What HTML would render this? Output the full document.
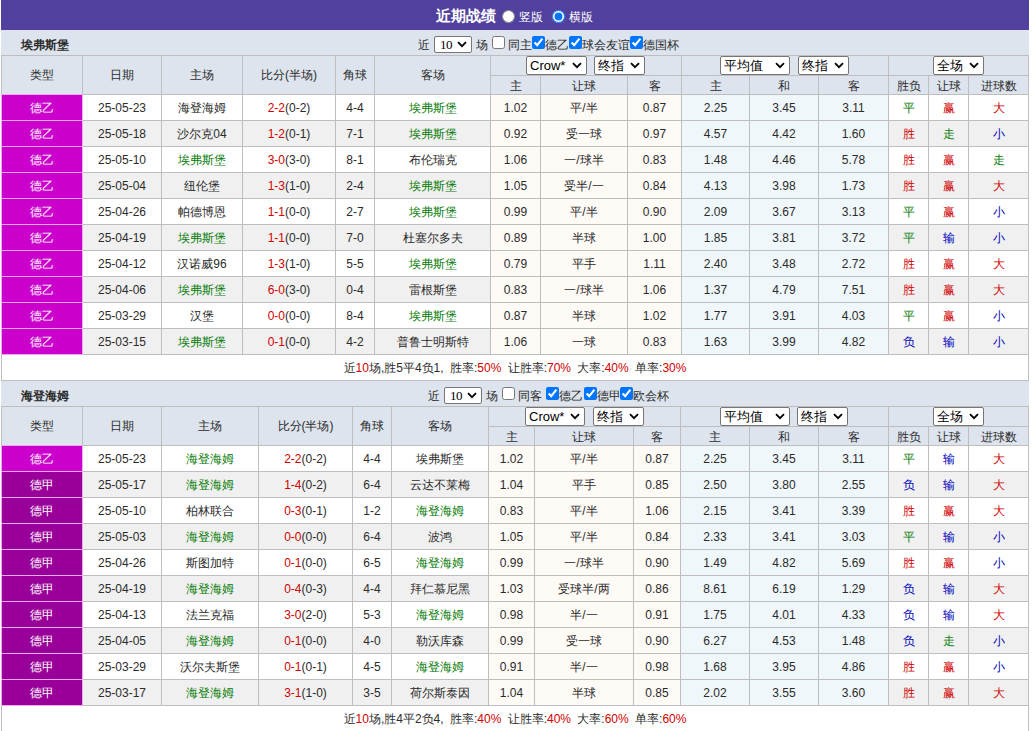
<!DOCTYPE html>
<html><head><meta charset="utf-8"><style>
html,body{margin:0;padding:0;background:#fff;width:1033px;height:731px;overflow:hidden;position:relative}
body{font-family:"Liberation Sans",sans-serif;font-size:12px;color:#2b2b2b}
div,input{position:absolute;box-sizing:border-box;white-space:nowrap}
input{margin:0;width:13px;height:13px}
.sel{height:19px;background:#fff;border:1px solid #767676;border-radius:2px;font-size:13px;color:#000;line-height:17px;padding-left:3px}
.sel svg{position:absolute}
i{font-style:normal;-webkit-text-stroke:0px currentColor}
</style></head><body>
<div style="left:1px;top:0px;width:1028px;height:30px;background:#52409e"></div><div style="left:436px;top:0;line-height:31px;font-size:15px;font-weight:bold;color:#fff">近期战绩</div><input type="radio" style="left:502px;top:10px"><div style="left:519px;top:2px;line-height:31px;color:#fff">竖版</div><input type="radio" checked style="left:552px;top:10px"><div style="left:569px;top:2px;line-height:31px;color:#fff">横版</div><div style="left:1px;top:30px;width:1028px;height:25px;background:#dde4ed"></div><div style="left:21px;top:33px;width:100px;height:25px;font-weight:bold;color:#2b2b2b;line-height:25px;">埃弗斯堡</div><div style="left:418px;top:30px;line-height:31px;color:#2b2b2b">近</div><div class="sel" style="left:434px;top:36px;width:38px;height:17px;line-height:15px;font-family:Liberation Serif,serif;letter-spacing:-0.5px;padding-left:5px">10<svg width="10" height="7" viewBox="0 0 10 7" style="position:absolute;right:4px;top:4px"><path d="M1 1.2 L5 5.2 L9 1.2" stroke="#000" stroke-width="1.8" fill="none"/></svg></div><div style="left:476px;top:30px;line-height:31px;color:#2b2b2b">场</div><input type="checkbox"  style="left:492px;top:36px"><div style="left:508px;top:30px;line-height:31px;color:#2b2b2b">同主</div><input type="checkbox" checked style="left:532px;top:36px"><div style="left:545px;top:30px;line-height:31px;color:#2b2b2b">德乙</div><input type="checkbox" checked style="left:569px;top:36px"><div style="left:582px;top:30px;line-height:31px;color:#2b2b2b">球会友谊</div><input type="checkbox" checked style="left:630px;top:36px"><div style="left:643px;top:30px;line-height:31px;color:#2b2b2b">德国杯</div><div style="left:1px;top:55px;width:1028px;height:330px;background:#bebebe"></div><div style="left:2px;top:56px;width:80px;height:38px;background:#dde4ed;line-height:38px;text-align:center;">类型</div><div style="left:83px;top:56px;width:78px;height:38px;background:#dde4ed;line-height:38px;text-align:center;">日期</div><div style="left:162px;top:56px;width:80px;height:38px;background:#dde4ed;line-height:38px;text-align:center;">主场</div><div style="left:243px;top:56px;width:92px;height:38px;background:#dde4ed;line-height:38px;text-align:center;">比分(半场)</div><div style="left:336px;top:56px;width:38px;height:38px;background:#dde4ed;line-height:38px;text-align:center;">角球</div><div style="left:375px;top:56px;width:115px;height:38px;background:#dde4ed;line-height:38px;text-align:center;">客场</div><div style="left:491px;top:56px;width:190px;height:19px;background:#dde4ed;line-height:19px;text-align:center;"></div><div style="left:682px;top:56px;width:206px;height:19px;background:#dde4ed;line-height:19px;text-align:center;"></div><div style="left:889px;top:56px;width:139px;height:19px;background:#dde4ed;line-height:19px;text-align:center;"></div><div style="left:491px;top:76px;width:49px;height:18px;background:#dde4ed;line-height:20px;text-align:center;">主</div><div style="left:541px;top:76px;width:86px;height:18px;background:#dde4ed;line-height:20px;text-align:center;">让球</div><div style="left:628px;top:76px;width:53px;height:18px;background:#dde4ed;line-height:20px;text-align:center;">客</div><div style="left:682px;top:76px;width:67px;height:18px;background:#dde4ed;line-height:20px;text-align:center;">主</div><div style="left:750px;top:76px;width:68px;height:18px;background:#dde4ed;line-height:20px;text-align:center;">和</div><div style="left:819px;top:76px;width:69px;height:18px;background:#dde4ed;line-height:20px;text-align:center;">客</div><div style="left:889px;top:76px;width:39px;height:18px;background:#dde4ed;line-height:20px;text-align:center;">胜负</div><div style="left:929px;top:76px;width:39px;height:18px;background:#dde4ed;line-height:20px;text-align:center;">让球</div><div style="left:969px;top:76px;width:59px;height:18px;background:#dde4ed;line-height:20px;text-align:center;">进球数</div><div class="sel" style="left:526px;top:56px;width:61px;">Crow*<svg width="10" height="7" viewBox="0 0 10 7" style="position:absolute;right:4px;top:5px"><path d="M1 1.2 L5 5.2 L9 1.2" stroke="#000" stroke-width="1.8" fill="none"/></svg></div><div class="sel" style="left:594px;top:56px;width:51px;">终指<svg width="10" height="7" viewBox="0 0 10 7" style="position:absolute;right:4px;top:5px"><path d="M1 1.2 L5 5.2 L9 1.2" stroke="#000" stroke-width="1.8" fill="none"/></svg></div><div class="sel" style="left:720px;top:56px;width:70px;">平均值<svg width="10" height="7" viewBox="0 0 10 7" style="position:absolute;right:4px;top:5px"><path d="M1 1.2 L5 5.2 L9 1.2" stroke="#000" stroke-width="1.8" fill="none"/></svg></div><div class="sel" style="left:798px;top:56px;width:51px;">终指<svg width="10" height="7" viewBox="0 0 10 7" style="position:absolute;right:4px;top:5px"><path d="M1 1.2 L5 5.2 L9 1.2" stroke="#000" stroke-width="1.8" fill="none"/></svg></div><div class="sel" style="left:933px;top:56px;width:51px;">全场<svg width="10" height="7" viewBox="0 0 10 7" style="position:absolute;right:4px;top:5px"><path d="M1 1.2 L5 5.2 L9 1.2" stroke="#000" stroke-width="1.8" fill="none"/></svg></div><div style="left:1px;top:94px;width:82px;height:27px;background:#f0a8f0"></div><div style="left:2px;top:95px;width:80px;height:25px;background:#cc00cc;line-height:27px;text-align:center;color:#fff">德乙</div><div style="left:83px;top:95px;width:78px;height:25px;background:#ffffff;line-height:27px;text-align:center;">25-05-23</div><div style="left:162px;top:95px;width:80px;height:25px;background:#ffffff;line-height:27px;text-align:center;">海登海姆</div><div style="left:243px;top:95px;width:92px;height:25px;background:#ffffff;line-height:27px;text-align:center;"><span style="color:#d00000">2-2</span>(0-2)</div><div style="left:336px;top:95px;width:38px;height:25px;background:#ffffff;line-height:27px;text-align:center;">4-4</div><div style="left:375px;top:95px;width:115px;height:25px;background:#ffffff;line-height:27px;text-align:center;color:#0a7d0a">埃弗斯堡</div><div style="left:491px;top:95px;width:49px;height:25px;background:#fefaf6;line-height:27px;text-align:center;">1.02</div><div style="left:541px;top:95px;width:86px;height:25px;background:#fefaf6;line-height:27px;text-align:center;">平/半</div><div style="left:628px;top:95px;width:53px;height:25px;background:#fefaf6;line-height:27px;text-align:center;">0.87</div><div style="left:682px;top:95px;width:67px;height:25px;background:#eff7fa;line-height:27px;text-align:center;">2.25</div><div style="left:750px;top:95px;width:68px;height:25px;background:#eff7fa;line-height:27px;text-align:center;">3.45</div><div style="left:819px;top:95px;width:69px;height:25px;background:#eff7fa;line-height:27px;text-align:center;">3.11</div><div style="left:889px;top:95px;width:39px;height:25px;background:#ffffff;line-height:27px;text-align:center;color:#0a7d0a">平</div><div style="left:929px;top:95px;width:39px;height:25px;background:#ffffff;line-height:27px;text-align:center;color:#d00000">赢</div><div style="left:969px;top:95px;width:59px;height:25px;background:#ffffff;line-height:27px;text-align:center;color:#d00000">大</div><div style="left:1px;top:120px;width:82px;height:27px;background:#f0a8f0"></div><div style="left:2px;top:121px;width:80px;height:25px;background:#cc00cc;line-height:27px;text-align:center;color:#fff">德乙</div><div style="left:83px;top:121px;width:78px;height:25px;background:#f0f0f0;line-height:27px;text-align:center;">25-05-18</div><div style="left:162px;top:121px;width:80px;height:25px;background:#f0f0f0;line-height:27px;text-align:center;">沙尔克04</div><div style="left:243px;top:121px;width:92px;height:25px;background:#f0f0f0;line-height:27px;text-align:center;"><span style="color:#d00000">1-2</span>(0-1)</div><div style="left:336px;top:121px;width:38px;height:25px;background:#f0f0f0;line-height:27px;text-align:center;">7-1</div><div style="left:375px;top:121px;width:115px;height:25px;background:#f0f0f0;line-height:27px;text-align:center;color:#0a7d0a">埃弗斯堡</div><div style="left:491px;top:121px;width:49px;height:25px;background:#fefaf6;line-height:27px;text-align:center;">0.92</div><div style="left:541px;top:121px;width:86px;height:25px;background:#fefaf6;line-height:27px;text-align:center;">受一球</div><div style="left:628px;top:121px;width:53px;height:25px;background:#fefaf6;line-height:27px;text-align:center;">0.97</div><div style="left:682px;top:121px;width:67px;height:25px;background:#eff7fa;line-height:27px;text-align:center;">4.57</div><div style="left:750px;top:121px;width:68px;height:25px;background:#eff7fa;line-height:27px;text-align:center;">4.42</div><div style="left:819px;top:121px;width:69px;height:25px;background:#eff7fa;line-height:27px;text-align:center;">1.60</div><div style="left:889px;top:121px;width:39px;height:25px;background:#f0f0f0;line-height:27px;text-align:center;color:#d00000">胜</div><div style="left:929px;top:121px;width:39px;height:25px;background:#f0f0f0;line-height:27px;text-align:center;color:#0a7d0a">走</div><div style="left:969px;top:121px;width:59px;height:25px;background:#f0f0f0;line-height:27px;text-align:center;color:#0000bb">小</div><div style="left:1px;top:146px;width:82px;height:27px;background:#f0a8f0"></div><div style="left:2px;top:147px;width:80px;height:25px;background:#cc00cc;line-height:27px;text-align:center;color:#fff">德乙</div><div style="left:83px;top:147px;width:78px;height:25px;background:#ffffff;line-height:27px;text-align:center;">25-05-10</div><div style="left:162px;top:147px;width:80px;height:25px;background:#ffffff;line-height:27px;text-align:center;color:#0a7d0a">埃弗斯堡</div><div style="left:243px;top:147px;width:92px;height:25px;background:#ffffff;line-height:27px;text-align:center;"><span style="color:#d00000">3-0</span>(3-0)</div><div style="left:336px;top:147px;width:38px;height:25px;background:#ffffff;line-height:27px;text-align:center;">8-1</div><div style="left:375px;top:147px;width:115px;height:25px;background:#ffffff;line-height:27px;text-align:center;">布伦瑞克</div><div style="left:491px;top:147px;width:49px;height:25px;background:#fefaf6;line-height:27px;text-align:center;">1.06</div><div style="left:541px;top:147px;width:86px;height:25px;background:#fefaf6;line-height:27px;text-align:center;">一/球半</div><div style="left:628px;top:147px;width:53px;height:25px;background:#fefaf6;line-height:27px;text-align:center;">0.83</div><div style="left:682px;top:147px;width:67px;height:25px;background:#eff7fa;line-height:27px;text-align:center;">1.48</div><div style="left:750px;top:147px;width:68px;height:25px;background:#eff7fa;line-height:27px;text-align:center;">4.46</div><div style="left:819px;top:147px;width:69px;height:25px;background:#eff7fa;line-height:27px;text-align:center;">5.78</div><div style="left:889px;top:147px;width:39px;height:25px;background:#ffffff;line-height:27px;text-align:center;color:#d00000">胜</div><div style="left:929px;top:147px;width:39px;height:25px;background:#ffffff;line-height:27px;text-align:center;color:#d00000">赢</div><div style="left:969px;top:147px;width:59px;height:25px;background:#ffffff;line-height:27px;text-align:center;color:#0a7d0a">走</div><div style="left:1px;top:172px;width:82px;height:27px;background:#f0a8f0"></div><div style="left:2px;top:173px;width:80px;height:25px;background:#cc00cc;line-height:27px;text-align:center;color:#fff">德乙</div><div style="left:83px;top:173px;width:78px;height:25px;background:#f0f0f0;line-height:27px;text-align:center;">25-05-04</div><div style="left:162px;top:173px;width:80px;height:25px;background:#f0f0f0;line-height:27px;text-align:center;">纽伦堡</div><div style="left:243px;top:173px;width:92px;height:25px;background:#f0f0f0;line-height:27px;text-align:center;"><span style="color:#d00000">1-3</span>(1-0)</div><div style="left:336px;top:173px;width:38px;height:25px;background:#f0f0f0;line-height:27px;text-align:center;">2-4</div><div style="left:375px;top:173px;width:115px;height:25px;background:#f0f0f0;line-height:27px;text-align:center;color:#0a7d0a">埃弗斯堡</div><div style="left:491px;top:173px;width:49px;height:25px;background:#fefaf6;line-height:27px;text-align:center;">1.05</div><div style="left:541px;top:173px;width:86px;height:25px;background:#fefaf6;line-height:27px;text-align:center;">受半/一</div><div style="left:628px;top:173px;width:53px;height:25px;background:#fefaf6;line-height:27px;text-align:center;">0.84</div><div style="left:682px;top:173px;width:67px;height:25px;background:#eff7fa;line-height:27px;text-align:center;">4.13</div><div style="left:750px;top:173px;width:68px;height:25px;background:#eff7fa;line-height:27px;text-align:center;">3.98</div><div style="left:819px;top:173px;width:69px;height:25px;background:#eff7fa;line-height:27px;text-align:center;">1.73</div><div style="left:889px;top:173px;width:39px;height:25px;background:#f0f0f0;line-height:27px;text-align:center;color:#d00000">胜</div><div style="left:929px;top:173px;width:39px;height:25px;background:#f0f0f0;line-height:27px;text-align:center;color:#d00000">赢</div><div style="left:969px;top:173px;width:59px;height:25px;background:#f0f0f0;line-height:27px;text-align:center;color:#d00000">大</div><div style="left:1px;top:198px;width:82px;height:27px;background:#f0a8f0"></div><div style="left:2px;top:199px;width:80px;height:25px;background:#cc00cc;line-height:27px;text-align:center;color:#fff">德乙</div><div style="left:83px;top:199px;width:78px;height:25px;background:#ffffff;line-height:27px;text-align:center;">25-04-26</div><div style="left:162px;top:199px;width:80px;height:25px;background:#ffffff;line-height:27px;text-align:center;">帕德博恩</div><div style="left:243px;top:199px;width:92px;height:25px;background:#ffffff;line-height:27px;text-align:center;"><span style="color:#d00000">1-1</span>(0-0)</div><div style="left:336px;top:199px;width:38px;height:25px;background:#ffffff;line-height:27px;text-align:center;">2-7</div><div style="left:375px;top:199px;width:115px;height:25px;background:#ffffff;line-height:27px;text-align:center;color:#0a7d0a">埃弗斯堡</div><div style="left:491px;top:199px;width:49px;height:25px;background:#fefaf6;line-height:27px;text-align:center;">0.99</div><div style="left:541px;top:199px;width:86px;height:25px;background:#fefaf6;line-height:27px;text-align:center;">平/半</div><div style="left:628px;top:199px;width:53px;height:25px;background:#fefaf6;line-height:27px;text-align:center;">0.90</div><div style="left:682px;top:199px;width:67px;height:25px;background:#eff7fa;line-height:27px;text-align:center;">2.09</div><div style="left:750px;top:199px;width:68px;height:25px;background:#eff7fa;line-height:27px;text-align:center;">3.67</div><div style="left:819px;top:199px;width:69px;height:25px;background:#eff7fa;line-height:27px;text-align:center;">3.13</div><div style="left:889px;top:199px;width:39px;height:25px;background:#ffffff;line-height:27px;text-align:center;color:#0a7d0a">平</div><div style="left:929px;top:199px;width:39px;height:25px;background:#ffffff;line-height:27px;text-align:center;color:#d00000">赢</div><div style="left:969px;top:199px;width:59px;height:25px;background:#ffffff;line-height:27px;text-align:center;color:#0000bb">小</div><div style="left:1px;top:224px;width:82px;height:27px;background:#f0a8f0"></div><div style="left:2px;top:225px;width:80px;height:25px;background:#cc00cc;line-height:27px;text-align:center;color:#fff">德乙</div><div style="left:83px;top:225px;width:78px;height:25px;background:#f0f0f0;line-height:27px;text-align:center;">25-04-19</div><div style="left:162px;top:225px;width:80px;height:25px;background:#f0f0f0;line-height:27px;text-align:center;color:#0a7d0a">埃弗斯堡</div><div style="left:243px;top:225px;width:92px;height:25px;background:#f0f0f0;line-height:27px;text-align:center;"><span style="color:#d00000">1-1</span>(0-0)</div><div style="left:336px;top:225px;width:38px;height:25px;background:#f0f0f0;line-height:27px;text-align:center;">7-0</div><div style="left:375px;top:225px;width:115px;height:25px;background:#f0f0f0;line-height:27px;text-align:center;">杜塞尔多夫</div><div style="left:491px;top:225px;width:49px;height:25px;background:#fefaf6;line-height:27px;text-align:center;">0.89</div><div style="left:541px;top:225px;width:86px;height:25px;background:#fefaf6;line-height:27px;text-align:center;">半球</div><div style="left:628px;top:225px;width:53px;height:25px;background:#fefaf6;line-height:27px;text-align:center;">1.00</div><div style="left:682px;top:225px;width:67px;height:25px;background:#eff7fa;line-height:27px;text-align:center;">1.85</div><div style="left:750px;top:225px;width:68px;height:25px;background:#eff7fa;line-height:27px;text-align:center;">3.81</div><div style="left:819px;top:225px;width:69px;height:25px;background:#eff7fa;line-height:27px;text-align:center;">3.72</div><div style="left:889px;top:225px;width:39px;height:25px;background:#f0f0f0;line-height:27px;text-align:center;color:#0a7d0a">平</div><div style="left:929px;top:225px;width:39px;height:25px;background:#f0f0f0;line-height:27px;text-align:center;color:#0000bb">输</div><div style="left:969px;top:225px;width:59px;height:25px;background:#f0f0f0;line-height:27px;text-align:center;color:#0000bb">小</div><div style="left:1px;top:250px;width:82px;height:27px;background:#f0a8f0"></div><div style="left:2px;top:251px;width:80px;height:25px;background:#cc00cc;line-height:27px;text-align:center;color:#fff">德乙</div><div style="left:83px;top:251px;width:78px;height:25px;background:#ffffff;line-height:27px;text-align:center;">25-04-12</div><div style="left:162px;top:251px;width:80px;height:25px;background:#ffffff;line-height:27px;text-align:center;">汉诺威96</div><div style="left:243px;top:251px;width:92px;height:25px;background:#ffffff;line-height:27px;text-align:center;"><span style="color:#d00000">1-3</span>(1-0)</div><div style="left:336px;top:251px;width:38px;height:25px;background:#ffffff;line-height:27px;text-align:center;">5-5</div><div style="left:375px;top:251px;width:115px;height:25px;background:#ffffff;line-height:27px;text-align:center;color:#0a7d0a">埃弗斯堡</div><div style="left:491px;top:251px;width:49px;height:25px;background:#fefaf6;line-height:27px;text-align:center;">0.79</div><div style="left:541px;top:251px;width:86px;height:25px;background:#fefaf6;line-height:27px;text-align:center;">平手</div><div style="left:628px;top:251px;width:53px;height:25px;background:#fefaf6;line-height:27px;text-align:center;">1.11</div><div style="left:682px;top:251px;width:67px;height:25px;background:#eff7fa;line-height:27px;text-align:center;">2.40</div><div style="left:750px;top:251px;width:68px;height:25px;background:#eff7fa;line-height:27px;text-align:center;">3.48</div><div style="left:819px;top:251px;width:69px;height:25px;background:#eff7fa;line-height:27px;text-align:center;">2.72</div><div style="left:889px;top:251px;width:39px;height:25px;background:#ffffff;line-height:27px;text-align:center;color:#d00000">胜</div><div style="left:929px;top:251px;width:39px;height:25px;background:#ffffff;line-height:27px;text-align:center;color:#d00000">赢</div><div style="left:969px;top:251px;width:59px;height:25px;background:#ffffff;line-height:27px;text-align:center;color:#d00000">大</div><div style="left:1px;top:276px;width:82px;height:27px;background:#f0a8f0"></div><div style="left:2px;top:277px;width:80px;height:25px;background:#cc00cc;line-height:27px;text-align:center;color:#fff">德乙</div><div style="left:83px;top:277px;width:78px;height:25px;background:#f0f0f0;line-height:27px;text-align:center;">25-04-06</div><div style="left:162px;top:277px;width:80px;height:25px;background:#f0f0f0;line-height:27px;text-align:center;color:#0a7d0a">埃弗斯堡</div><div style="left:243px;top:277px;width:92px;height:25px;background:#f0f0f0;line-height:27px;text-align:center;"><span style="color:#d00000">6-0</span>(3-0)</div><div style="left:336px;top:277px;width:38px;height:25px;background:#f0f0f0;line-height:27px;text-align:center;">0-4</div><div style="left:375px;top:277px;width:115px;height:25px;background:#f0f0f0;line-height:27px;text-align:center;">雷根斯堡</div><div style="left:491px;top:277px;width:49px;height:25px;background:#fefaf6;line-height:27px;text-align:center;">0.83</div><div style="left:541px;top:277px;width:86px;height:25px;background:#fefaf6;line-height:27px;text-align:center;">一/球半</div><div style="left:628px;top:277px;width:53px;height:25px;background:#fefaf6;line-height:27px;text-align:center;">1.06</div><div style="left:682px;top:277px;width:67px;height:25px;background:#eff7fa;line-height:27px;text-align:center;">1.37</div><div style="left:750px;top:277px;width:68px;height:25px;background:#eff7fa;line-height:27px;text-align:center;">4.79</div><div style="left:819px;top:277px;width:69px;height:25px;background:#eff7fa;line-height:27px;text-align:center;">7.51</div><div style="left:889px;top:277px;width:39px;height:25px;background:#f0f0f0;line-height:27px;text-align:center;color:#d00000">胜</div><div style="left:929px;top:277px;width:39px;height:25px;background:#f0f0f0;line-height:27px;text-align:center;color:#d00000">赢</div><div style="left:969px;top:277px;width:59px;height:25px;background:#f0f0f0;line-height:27px;text-align:center;color:#d00000">大</div><div style="left:1px;top:302px;width:82px;height:27px;background:#f0a8f0"></div><div style="left:2px;top:303px;width:80px;height:25px;background:#cc00cc;line-height:27px;text-align:center;color:#fff">德乙</div><div style="left:83px;top:303px;width:78px;height:25px;background:#ffffff;line-height:27px;text-align:center;">25-03-29</div><div style="left:162px;top:303px;width:80px;height:25px;background:#ffffff;line-height:27px;text-align:center;">汉堡</div><div style="left:243px;top:303px;width:92px;height:25px;background:#ffffff;line-height:27px;text-align:center;"><span style="color:#d00000">0-0</span>(0-0)</div><div style="left:336px;top:303px;width:38px;height:25px;background:#ffffff;line-height:27px;text-align:center;">8-4</div><div style="left:375px;top:303px;width:115px;height:25px;background:#ffffff;line-height:27px;text-align:center;color:#0a7d0a">埃弗斯堡</div><div style="left:491px;top:303px;width:49px;height:25px;background:#fefaf6;line-height:27px;text-align:center;">0.87</div><div style="left:541px;top:303px;width:86px;height:25px;background:#fefaf6;line-height:27px;text-align:center;">半球</div><div style="left:628px;top:303px;width:53px;height:25px;background:#fefaf6;line-height:27px;text-align:center;">1.02</div><div style="left:682px;top:303px;width:67px;height:25px;background:#eff7fa;line-height:27px;text-align:center;">1.77</div><div style="left:750px;top:303px;width:68px;height:25px;background:#eff7fa;line-height:27px;text-align:center;">3.91</div><div style="left:819px;top:303px;width:69px;height:25px;background:#eff7fa;line-height:27px;text-align:center;">4.03</div><div style="left:889px;top:303px;width:39px;height:25px;background:#ffffff;line-height:27px;text-align:center;color:#0a7d0a">平</div><div style="left:929px;top:303px;width:39px;height:25px;background:#ffffff;line-height:27px;text-align:center;color:#d00000">赢</div><div style="left:969px;top:303px;width:59px;height:25px;background:#ffffff;line-height:27px;text-align:center;color:#0000bb">小</div><div style="left:1px;top:328px;width:82px;height:27px;background:#f0a8f0"></div><div style="left:2px;top:329px;width:80px;height:25px;background:#cc00cc;line-height:27px;text-align:center;color:#fff">德乙</div><div style="left:83px;top:329px;width:78px;height:25px;background:#f0f0f0;line-height:27px;text-align:center;">25-03-15</div><div style="left:162px;top:329px;width:80px;height:25px;background:#f0f0f0;line-height:27px;text-align:center;color:#0a7d0a">埃弗斯堡</div><div style="left:243px;top:329px;width:92px;height:25px;background:#f0f0f0;line-height:27px;text-align:center;"><span style="color:#d00000">0-1</span>(0-0)</div><div style="left:336px;top:329px;width:38px;height:25px;background:#f0f0f0;line-height:27px;text-align:center;">4-2</div><div style="left:375px;top:329px;width:115px;height:25px;background:#f0f0f0;line-height:27px;text-align:center;">普鲁士明斯特</div><div style="left:491px;top:329px;width:49px;height:25px;background:#fefaf6;line-height:27px;text-align:center;">1.06</div><div style="left:541px;top:329px;width:86px;height:25px;background:#fefaf6;line-height:27px;text-align:center;">一球</div><div style="left:628px;top:329px;width:53px;height:25px;background:#fefaf6;line-height:27px;text-align:center;">0.83</div><div style="left:682px;top:329px;width:67px;height:25px;background:#eff7fa;line-height:27px;text-align:center;">1.63</div><div style="left:750px;top:329px;width:68px;height:25px;background:#eff7fa;line-height:27px;text-align:center;">3.99</div><div style="left:819px;top:329px;width:69px;height:25px;background:#eff7fa;line-height:27px;text-align:center;">4.82</div><div style="left:889px;top:329px;width:39px;height:25px;background:#f0f0f0;line-height:27px;text-align:center;color:#0000bb">负</div><div style="left:929px;top:329px;width:39px;height:25px;background:#f0f0f0;line-height:27px;text-align:center;color:#0000bb">输</div><div style="left:969px;top:329px;width:59px;height:25px;background:#f0f0f0;line-height:27px;text-align:center;color:#0000bb">小</div><div style="left:2px;top:355px;width:1026px;height:25px;background:#fff;line-height:26px;text-align:center;word-spacing:3px">近<span style="color:#d00000">10</span>场,胜5平4负1, 胜率:<span style="color:#d00000">50%</span> 让胜率:<span style="color:#d00000">70%</span> 大率:<span style="color:#d00000">40%</span> 单率:<span style="color:#d00000">30%</span></div><div style="left:1px;top:381px;width:1028px;height:25px;background:#dde4ed"></div><div style="left:21px;top:384px;width:100px;height:25px;font-weight:bold;color:#2b2b2b;line-height:25px;">海登海姆</div><div style="left:428px;top:381px;line-height:31px;color:#2b2b2b">近</div><div class="sel" style="left:444px;top:387px;width:38px;height:17px;line-height:15px;font-family:Liberation Serif,serif;letter-spacing:-0.5px;padding-left:5px">10<svg width="10" height="7" viewBox="0 0 10 7" style="position:absolute;right:4px;top:4px"><path d="M1 1.2 L5 5.2 L9 1.2" stroke="#000" stroke-width="1.8" fill="none"/></svg></div><div style="left:486px;top:381px;line-height:31px;color:#2b2b2b">场</div><input type="checkbox"  style="left:502px;top:387px"><div style="left:518px;top:381px;line-height:31px;color:#2b2b2b">同客</div><input type="checkbox" checked style="left:546px;top:387px"><div style="left:559px;top:381px;line-height:31px;color:#2b2b2b">德乙</div><input type="checkbox" checked style="left:584px;top:387px"><div style="left:597px;top:381px;line-height:31px;color:#2b2b2b">德甲</div><input type="checkbox" checked style="left:620px;top:387px"><div style="left:633px;top:381px;line-height:31px;color:#2b2b2b">欧会杯</div><div style="left:1px;top:406px;width:1028px;height:330px;background:#bebebe"></div><div style="left:2px;top:407px;width:80px;height:38px;background:#dde4ed;line-height:38px;text-align:center;">类型</div><div style="left:83px;top:407px;width:78px;height:38px;background:#dde4ed;line-height:38px;text-align:center;">日期</div><div style="left:162px;top:407px;width:96px;height:38px;background:#dde4ed;line-height:38px;text-align:center;">主场</div><div style="left:259px;top:407px;width:93px;height:38px;background:#dde4ed;line-height:38px;text-align:center;">比分(半场)</div><div style="left:353px;top:407px;width:38px;height:38px;background:#dde4ed;line-height:38px;text-align:center;">角球</div><div style="left:392px;top:407px;width:96px;height:38px;background:#dde4ed;line-height:38px;text-align:center;">客场</div><div style="left:489px;top:407px;width:191px;height:19px;background:#dde4ed;line-height:19px;text-align:center;"></div><div style="left:681px;top:407px;width:207px;height:19px;background:#dde4ed;line-height:19px;text-align:center;"></div><div style="left:889px;top:407px;width:139px;height:19px;background:#dde4ed;line-height:19px;text-align:center;"></div><div style="left:489px;top:427px;width:45px;height:18px;background:#dde4ed;line-height:20px;text-align:center;">主</div><div style="left:535px;top:427px;width:98px;height:18px;background:#dde4ed;line-height:20px;text-align:center;">让球</div><div style="left:634px;top:427px;width:46px;height:18px;background:#dde4ed;line-height:20px;text-align:center;">客</div><div style="left:681px;top:427px;width:68px;height:18px;background:#dde4ed;line-height:20px;text-align:center;">主</div><div style="left:750px;top:427px;width:68px;height:18px;background:#dde4ed;line-height:20px;text-align:center;">和</div><div style="left:819px;top:427px;width:69px;height:18px;background:#dde4ed;line-height:20px;text-align:center;">客</div><div style="left:889px;top:427px;width:39px;height:18px;background:#dde4ed;line-height:20px;text-align:center;">胜负</div><div style="left:929px;top:427px;width:39px;height:18px;background:#dde4ed;line-height:20px;text-align:center;">让球</div><div style="left:969px;top:427px;width:59px;height:18px;background:#dde4ed;line-height:20px;text-align:center;">进球数</div><div class="sel" style="left:525px;top:407px;width:60px;">Crow*<svg width="10" height="7" viewBox="0 0 10 7" style="position:absolute;right:4px;top:5px"><path d="M1 1.2 L5 5.2 L9 1.2" stroke="#000" stroke-width="1.8" fill="none"/></svg></div><div class="sel" style="left:593px;top:407px;width:51px;">终指<svg width="10" height="7" viewBox="0 0 10 7" style="position:absolute;right:4px;top:5px"><path d="M1 1.2 L5 5.2 L9 1.2" stroke="#000" stroke-width="1.8" fill="none"/></svg></div><div class="sel" style="left:720px;top:407px;width:70px;">平均值<svg width="10" height="7" viewBox="0 0 10 7" style="position:absolute;right:4px;top:5px"><path d="M1 1.2 L5 5.2 L9 1.2" stroke="#000" stroke-width="1.8" fill="none"/></svg></div><div class="sel" style="left:797px;top:407px;width:51px;">终指<svg width="10" height="7" viewBox="0 0 10 7" style="position:absolute;right:4px;top:5px"><path d="M1 1.2 L5 5.2 L9 1.2" stroke="#000" stroke-width="1.8" fill="none"/></svg></div><div class="sel" style="left:933px;top:407px;width:51px;">全场<svg width="10" height="7" viewBox="0 0 10 7" style="position:absolute;right:4px;top:5px"><path d="M1 1.2 L5 5.2 L9 1.2" stroke="#000" stroke-width="1.8" fill="none"/></svg></div><div style="left:1px;top:445px;width:82px;height:27px;background:#f0a8f0"></div><div style="left:2px;top:446px;width:80px;height:25px;background:#cc00cc;line-height:27px;text-align:center;color:#fff">德乙</div><div style="left:83px;top:446px;width:78px;height:25px;background:#ffffff;line-height:27px;text-align:center;">25-05-23</div><div style="left:162px;top:446px;width:96px;height:25px;background:#ffffff;line-height:27px;text-align:center;color:#0a7d0a">海登海姆</div><div style="left:259px;top:446px;width:93px;height:25px;background:#ffffff;line-height:27px;text-align:center;"><span style="color:#d00000">2-2</span>(0-2)</div><div style="left:353px;top:446px;width:38px;height:25px;background:#ffffff;line-height:27px;text-align:center;">4-4</div><div style="left:392px;top:446px;width:96px;height:25px;background:#ffffff;line-height:27px;text-align:center;">埃弗斯堡</div><div style="left:489px;top:446px;width:45px;height:25px;background:#fefaf6;line-height:27px;text-align:center;">1.02</div><div style="left:535px;top:446px;width:98px;height:25px;background:#fefaf6;line-height:27px;text-align:center;">平/半</div><div style="left:634px;top:446px;width:46px;height:25px;background:#fefaf6;line-height:27px;text-align:center;">0.87</div><div style="left:681px;top:446px;width:68px;height:25px;background:#eff7fa;line-height:27px;text-align:center;">2.25</div><div style="left:750px;top:446px;width:68px;height:25px;background:#eff7fa;line-height:27px;text-align:center;">3.45</div><div style="left:819px;top:446px;width:69px;height:25px;background:#eff7fa;line-height:27px;text-align:center;">3.11</div><div style="left:889px;top:446px;width:39px;height:25px;background:#ffffff;line-height:27px;text-align:center;color:#0a7d0a">平</div><div style="left:929px;top:446px;width:39px;height:25px;background:#ffffff;line-height:27px;text-align:center;color:#0000bb">输</div><div style="left:969px;top:446px;width:59px;height:25px;background:#ffffff;line-height:27px;text-align:center;color:#d00000">大</div><div style="left:1px;top:471px;width:82px;height:27px;background:#f0a8f0"></div><div style="left:2px;top:472px;width:80px;height:25px;background:#990099;line-height:27px;text-align:center;color:#fff">德甲</div><div style="left:83px;top:472px;width:78px;height:25px;background:#f0f0f0;line-height:27px;text-align:center;">25-05-17</div><div style="left:162px;top:472px;width:96px;height:25px;background:#f0f0f0;line-height:27px;text-align:center;color:#0a7d0a">海登海姆</div><div style="left:259px;top:472px;width:93px;height:25px;background:#f0f0f0;line-height:27px;text-align:center;"><span style="color:#d00000">1-4</span>(0-2)</div><div style="left:353px;top:472px;width:38px;height:25px;background:#f0f0f0;line-height:27px;text-align:center;">6-4</div><div style="left:392px;top:472px;width:96px;height:25px;background:#f0f0f0;line-height:27px;text-align:center;">云达不莱梅</div><div style="left:489px;top:472px;width:45px;height:25px;background:#fefaf6;line-height:27px;text-align:center;">1.04</div><div style="left:535px;top:472px;width:98px;height:25px;background:#fefaf6;line-height:27px;text-align:center;">平手</div><div style="left:634px;top:472px;width:46px;height:25px;background:#fefaf6;line-height:27px;text-align:center;">0.85</div><div style="left:681px;top:472px;width:68px;height:25px;background:#eff7fa;line-height:27px;text-align:center;">2.50</div><div style="left:750px;top:472px;width:68px;height:25px;background:#eff7fa;line-height:27px;text-align:center;">3.80</div><div style="left:819px;top:472px;width:69px;height:25px;background:#eff7fa;line-height:27px;text-align:center;">2.55</div><div style="left:889px;top:472px;width:39px;height:25px;background:#f0f0f0;line-height:27px;text-align:center;color:#0000bb">负</div><div style="left:929px;top:472px;width:39px;height:25px;background:#f0f0f0;line-height:27px;text-align:center;color:#0000bb">输</div><div style="left:969px;top:472px;width:59px;height:25px;background:#f0f0f0;line-height:27px;text-align:center;color:#d00000">大</div><div style="left:1px;top:497px;width:82px;height:27px;background:#f0a8f0"></div><div style="left:2px;top:498px;width:80px;height:25px;background:#990099;line-height:27px;text-align:center;color:#fff">德甲</div><div style="left:83px;top:498px;width:78px;height:25px;background:#ffffff;line-height:27px;text-align:center;">25-05-10</div><div style="left:162px;top:498px;width:96px;height:25px;background:#ffffff;line-height:27px;text-align:center;">柏林联合</div><div style="left:259px;top:498px;width:93px;height:25px;background:#ffffff;line-height:27px;text-align:center;"><span style="color:#d00000">0-3</span>(0-1)</div><div style="left:353px;top:498px;width:38px;height:25px;background:#ffffff;line-height:27px;text-align:center;">1-2</div><div style="left:392px;top:498px;width:96px;height:25px;background:#ffffff;line-height:27px;text-align:center;color:#0a7d0a">海登海姆</div><div style="left:489px;top:498px;width:45px;height:25px;background:#fefaf6;line-height:27px;text-align:center;">0.83</div><div style="left:535px;top:498px;width:98px;height:25px;background:#fefaf6;line-height:27px;text-align:center;">平/半</div><div style="left:634px;top:498px;width:46px;height:25px;background:#fefaf6;line-height:27px;text-align:center;">1.06</div><div style="left:681px;top:498px;width:68px;height:25px;background:#eff7fa;line-height:27px;text-align:center;">2.15</div><div style="left:750px;top:498px;width:68px;height:25px;background:#eff7fa;line-height:27px;text-align:center;">3.41</div><div style="left:819px;top:498px;width:69px;height:25px;background:#eff7fa;line-height:27px;text-align:center;">3.39</div><div style="left:889px;top:498px;width:39px;height:25px;background:#ffffff;line-height:27px;text-align:center;color:#d00000">胜</div><div style="left:929px;top:498px;width:39px;height:25px;background:#ffffff;line-height:27px;text-align:center;color:#d00000">赢</div><div style="left:969px;top:498px;width:59px;height:25px;background:#ffffff;line-height:27px;text-align:center;color:#d00000">大</div><div style="left:1px;top:523px;width:82px;height:27px;background:#f0a8f0"></div><div style="left:2px;top:524px;width:80px;height:25px;background:#990099;line-height:27px;text-align:center;color:#fff">德甲</div><div style="left:83px;top:524px;width:78px;height:25px;background:#f0f0f0;line-height:27px;text-align:center;">25-05-03</div><div style="left:162px;top:524px;width:96px;height:25px;background:#f0f0f0;line-height:27px;text-align:center;color:#0a7d0a">海登海姆</div><div style="left:259px;top:524px;width:93px;height:25px;background:#f0f0f0;line-height:27px;text-align:center;"><span style="color:#d00000">0-0</span>(0-0)</div><div style="left:353px;top:524px;width:38px;height:25px;background:#f0f0f0;line-height:27px;text-align:center;">6-4</div><div style="left:392px;top:524px;width:96px;height:25px;background:#f0f0f0;line-height:27px;text-align:center;">波鸿</div><div style="left:489px;top:524px;width:45px;height:25px;background:#fefaf6;line-height:27px;text-align:center;">1.05</div><div style="left:535px;top:524px;width:98px;height:25px;background:#fefaf6;line-height:27px;text-align:center;">平/半</div><div style="left:634px;top:524px;width:46px;height:25px;background:#fefaf6;line-height:27px;text-align:center;">0.84</div><div style="left:681px;top:524px;width:68px;height:25px;background:#eff7fa;line-height:27px;text-align:center;">2.33</div><div style="left:750px;top:524px;width:68px;height:25px;background:#eff7fa;line-height:27px;text-align:center;">3.41</div><div style="left:819px;top:524px;width:69px;height:25px;background:#eff7fa;line-height:27px;text-align:center;">3.03</div><div style="left:889px;top:524px;width:39px;height:25px;background:#f0f0f0;line-height:27px;text-align:center;color:#0a7d0a">平</div><div style="left:929px;top:524px;width:39px;height:25px;background:#f0f0f0;line-height:27px;text-align:center;color:#0000bb">输</div><div style="left:969px;top:524px;width:59px;height:25px;background:#f0f0f0;line-height:27px;text-align:center;color:#0000bb">小</div><div style="left:1px;top:549px;width:82px;height:27px;background:#f0a8f0"></div><div style="left:2px;top:550px;width:80px;height:25px;background:#990099;line-height:27px;text-align:center;color:#fff">德甲</div><div style="left:83px;top:550px;width:78px;height:25px;background:#ffffff;line-height:27px;text-align:center;">25-04-26</div><div style="left:162px;top:550px;width:96px;height:25px;background:#ffffff;line-height:27px;text-align:center;">斯图加特</div><div style="left:259px;top:550px;width:93px;height:25px;background:#ffffff;line-height:27px;text-align:center;"><span style="color:#d00000">0-1</span>(0-0)</div><div style="left:353px;top:550px;width:38px;height:25px;background:#ffffff;line-height:27px;text-align:center;">6-5</div><div style="left:392px;top:550px;width:96px;height:25px;background:#ffffff;line-height:27px;text-align:center;color:#0a7d0a">海登海姆</div><div style="left:489px;top:550px;width:45px;height:25px;background:#fefaf6;line-height:27px;text-align:center;">0.99</div><div style="left:535px;top:550px;width:98px;height:25px;background:#fefaf6;line-height:27px;text-align:center;">一/球半</div><div style="left:634px;top:550px;width:46px;height:25px;background:#fefaf6;line-height:27px;text-align:center;">0.90</div><div style="left:681px;top:550px;width:68px;height:25px;background:#eff7fa;line-height:27px;text-align:center;">1.49</div><div style="left:750px;top:550px;width:68px;height:25px;background:#eff7fa;line-height:27px;text-align:center;">4.82</div><div style="left:819px;top:550px;width:69px;height:25px;background:#eff7fa;line-height:27px;text-align:center;">5.69</div><div style="left:889px;top:550px;width:39px;height:25px;background:#ffffff;line-height:27px;text-align:center;color:#d00000">胜</div><div style="left:929px;top:550px;width:39px;height:25px;background:#ffffff;line-height:27px;text-align:center;color:#d00000">赢</div><div style="left:969px;top:550px;width:59px;height:25px;background:#ffffff;line-height:27px;text-align:center;color:#0000bb">小</div><div style="left:1px;top:575px;width:82px;height:27px;background:#f0a8f0"></div><div style="left:2px;top:576px;width:80px;height:25px;background:#990099;line-height:27px;text-align:center;color:#fff">德甲</div><div style="left:83px;top:576px;width:78px;height:25px;background:#f0f0f0;line-height:27px;text-align:center;">25-04-19</div><div style="left:162px;top:576px;width:96px;height:25px;background:#f0f0f0;line-height:27px;text-align:center;color:#0a7d0a">海登海姆</div><div style="left:259px;top:576px;width:93px;height:25px;background:#f0f0f0;line-height:27px;text-align:center;"><span style="color:#d00000">0-4</span>(0-3)</div><div style="left:353px;top:576px;width:38px;height:25px;background:#f0f0f0;line-height:27px;text-align:center;">4-4</div><div style="left:392px;top:576px;width:96px;height:25px;background:#f0f0f0;line-height:27px;text-align:center;">拜仁慕尼黑</div><div style="left:489px;top:576px;width:45px;height:25px;background:#fefaf6;line-height:27px;text-align:center;">1.03</div><div style="left:535px;top:576px;width:98px;height:25px;background:#fefaf6;line-height:27px;text-align:center;">受球半/两</div><div style="left:634px;top:576px;width:46px;height:25px;background:#fefaf6;line-height:27px;text-align:center;">0.86</div><div style="left:681px;top:576px;width:68px;height:25px;background:#eff7fa;line-height:27px;text-align:center;">8.61</div><div style="left:750px;top:576px;width:68px;height:25px;background:#eff7fa;line-height:27px;text-align:center;">6.19</div><div style="left:819px;top:576px;width:69px;height:25px;background:#eff7fa;line-height:27px;text-align:center;">1.29</div><div style="left:889px;top:576px;width:39px;height:25px;background:#f0f0f0;line-height:27px;text-align:center;color:#0000bb">负</div><div style="left:929px;top:576px;width:39px;height:25px;background:#f0f0f0;line-height:27px;text-align:center;color:#0000bb">输</div><div style="left:969px;top:576px;width:59px;height:25px;background:#f0f0f0;line-height:27px;text-align:center;color:#d00000">大</div><div style="left:1px;top:601px;width:82px;height:27px;background:#f0a8f0"></div><div style="left:2px;top:602px;width:80px;height:25px;background:#990099;line-height:27px;text-align:center;color:#fff">德甲</div><div style="left:83px;top:602px;width:78px;height:25px;background:#ffffff;line-height:27px;text-align:center;">25-04-13</div><div style="left:162px;top:602px;width:96px;height:25px;background:#ffffff;line-height:27px;text-align:center;">法兰克福</div><div style="left:259px;top:602px;width:93px;height:25px;background:#ffffff;line-height:27px;text-align:center;"><span style="color:#d00000">3-0</span>(2-0)</div><div style="left:353px;top:602px;width:38px;height:25px;background:#ffffff;line-height:27px;text-align:center;">5-3</div><div style="left:392px;top:602px;width:96px;height:25px;background:#ffffff;line-height:27px;text-align:center;color:#0a7d0a">海登海姆</div><div style="left:489px;top:602px;width:45px;height:25px;background:#fefaf6;line-height:27px;text-align:center;">0.98</div><div style="left:535px;top:602px;width:98px;height:25px;background:#fefaf6;line-height:27px;text-align:center;">半/一</div><div style="left:634px;top:602px;width:46px;height:25px;background:#fefaf6;line-height:27px;text-align:center;">0.91</div><div style="left:681px;top:602px;width:68px;height:25px;background:#eff7fa;line-height:27px;text-align:center;">1.75</div><div style="left:750px;top:602px;width:68px;height:25px;background:#eff7fa;line-height:27px;text-align:center;">4.01</div><div style="left:819px;top:602px;width:69px;height:25px;background:#eff7fa;line-height:27px;text-align:center;">4.33</div><div style="left:889px;top:602px;width:39px;height:25px;background:#ffffff;line-height:27px;text-align:center;color:#0000bb">负</div><div style="left:929px;top:602px;width:39px;height:25px;background:#ffffff;line-height:27px;text-align:center;color:#0000bb">输</div><div style="left:969px;top:602px;width:59px;height:25px;background:#ffffff;line-height:27px;text-align:center;color:#d00000">大</div><div style="left:1px;top:627px;width:82px;height:27px;background:#f0a8f0"></div><div style="left:2px;top:628px;width:80px;height:25px;background:#990099;line-height:27px;text-align:center;color:#fff">德甲</div><div style="left:83px;top:628px;width:78px;height:25px;background:#f0f0f0;line-height:27px;text-align:center;">25-04-05</div><div style="left:162px;top:628px;width:96px;height:25px;background:#f0f0f0;line-height:27px;text-align:center;color:#0a7d0a">海登海姆</div><div style="left:259px;top:628px;width:93px;height:25px;background:#f0f0f0;line-height:27px;text-align:center;"><span style="color:#d00000">0-1</span>(0-0)</div><div style="left:353px;top:628px;width:38px;height:25px;background:#f0f0f0;line-height:27px;text-align:center;">4-0</div><div style="left:392px;top:628px;width:96px;height:25px;background:#f0f0f0;line-height:27px;text-align:center;">勒沃库森</div><div style="left:489px;top:628px;width:45px;height:25px;background:#fefaf6;line-height:27px;text-align:center;">0.99</div><div style="left:535px;top:628px;width:98px;height:25px;background:#fefaf6;line-height:27px;text-align:center;">受一球</div><div style="left:634px;top:628px;width:46px;height:25px;background:#fefaf6;line-height:27px;text-align:center;">0.90</div><div style="left:681px;top:628px;width:68px;height:25px;background:#eff7fa;line-height:27px;text-align:center;">6.27</div><div style="left:750px;top:628px;width:68px;height:25px;background:#eff7fa;line-height:27px;text-align:center;">4.53</div><div style="left:819px;top:628px;width:69px;height:25px;background:#eff7fa;line-height:27px;text-align:center;">1.48</div><div style="left:889px;top:628px;width:39px;height:25px;background:#f0f0f0;line-height:27px;text-align:center;color:#0000bb">负</div><div style="left:929px;top:628px;width:39px;height:25px;background:#f0f0f0;line-height:27px;text-align:center;color:#0a7d0a">走</div><div style="left:969px;top:628px;width:59px;height:25px;background:#f0f0f0;line-height:27px;text-align:center;color:#0000bb">小</div><div style="left:1px;top:653px;width:82px;height:27px;background:#f0a8f0"></div><div style="left:2px;top:654px;width:80px;height:25px;background:#990099;line-height:27px;text-align:center;color:#fff">德甲</div><div style="left:83px;top:654px;width:78px;height:25px;background:#ffffff;line-height:27px;text-align:center;">25-03-29</div><div style="left:162px;top:654px;width:96px;height:25px;background:#ffffff;line-height:27px;text-align:center;">沃尔夫斯堡</div><div style="left:259px;top:654px;width:93px;height:25px;background:#ffffff;line-height:27px;text-align:center;"><span style="color:#d00000">0-1</span>(0-1)</div><div style="left:353px;top:654px;width:38px;height:25px;background:#ffffff;line-height:27px;text-align:center;">4-5</div><div style="left:392px;top:654px;width:96px;height:25px;background:#ffffff;line-height:27px;text-align:center;color:#0a7d0a">海登海姆</div><div style="left:489px;top:654px;width:45px;height:25px;background:#fefaf6;line-height:27px;text-align:center;">0.91</div><div style="left:535px;top:654px;width:98px;height:25px;background:#fefaf6;line-height:27px;text-align:center;">半/一</div><div style="left:634px;top:654px;width:46px;height:25px;background:#fefaf6;line-height:27px;text-align:center;">0.98</div><div style="left:681px;top:654px;width:68px;height:25px;background:#eff7fa;line-height:27px;text-align:center;">1.68</div><div style="left:750px;top:654px;width:68px;height:25px;background:#eff7fa;line-height:27px;text-align:center;">3.95</div><div style="left:819px;top:654px;width:69px;height:25px;background:#eff7fa;line-height:27px;text-align:center;">4.86</div><div style="left:889px;top:654px;width:39px;height:25px;background:#ffffff;line-height:27px;text-align:center;color:#d00000">胜</div><div style="left:929px;top:654px;width:39px;height:25px;background:#ffffff;line-height:27px;text-align:center;color:#d00000">赢</div><div style="left:969px;top:654px;width:59px;height:25px;background:#ffffff;line-height:27px;text-align:center;color:#0000bb">小</div><div style="left:1px;top:679px;width:82px;height:27px;background:#f0a8f0"></div><div style="left:2px;top:680px;width:80px;height:25px;background:#990099;line-height:27px;text-align:center;color:#fff">德甲</div><div style="left:83px;top:680px;width:78px;height:25px;background:#f0f0f0;line-height:27px;text-align:center;">25-03-17</div><div style="left:162px;top:680px;width:96px;height:25px;background:#f0f0f0;line-height:27px;text-align:center;color:#0a7d0a">海登海姆</div><div style="left:259px;top:680px;width:93px;height:25px;background:#f0f0f0;line-height:27px;text-align:center;"><span style="color:#d00000">3-1</span>(1-0)</div><div style="left:353px;top:680px;width:38px;height:25px;background:#f0f0f0;line-height:27px;text-align:center;">3-5</div><div style="left:392px;top:680px;width:96px;height:25px;background:#f0f0f0;line-height:27px;text-align:center;">荷尔斯泰因</div><div style="left:489px;top:680px;width:45px;height:25px;background:#fefaf6;line-height:27px;text-align:center;">1.04</div><div style="left:535px;top:680px;width:98px;height:25px;background:#fefaf6;line-height:27px;text-align:center;">半球</div><div style="left:634px;top:680px;width:46px;height:25px;background:#fefaf6;line-height:27px;text-align:center;">0.85</div><div style="left:681px;top:680px;width:68px;height:25px;background:#eff7fa;line-height:27px;text-align:center;">2.02</div><div style="left:750px;top:680px;width:68px;height:25px;background:#eff7fa;line-height:27px;text-align:center;">3.55</div><div style="left:819px;top:680px;width:69px;height:25px;background:#eff7fa;line-height:27px;text-align:center;">3.60</div><div style="left:889px;top:680px;width:39px;height:25px;background:#f0f0f0;line-height:27px;text-align:center;color:#d00000">胜</div><div style="left:929px;top:680px;width:39px;height:25px;background:#f0f0f0;line-height:27px;text-align:center;color:#d00000">赢</div><div style="left:969px;top:680px;width:59px;height:25px;background:#f0f0f0;line-height:27px;text-align:center;color:#d00000">大</div><div style="left:2px;top:706px;width:1026px;height:25px;background:#fff;line-height:26px;text-align:center;word-spacing:3px">近<span style="color:#d00000">10</span>场,胜4平2负4, 胜率:<span style="color:#d00000">40%</span> 让胜率:<span style="color:#d00000">40%</span> 大率:<span style="color:#d00000">60%</span> 单率:<span style="color:#d00000">60%</span></div>
</body></html>
